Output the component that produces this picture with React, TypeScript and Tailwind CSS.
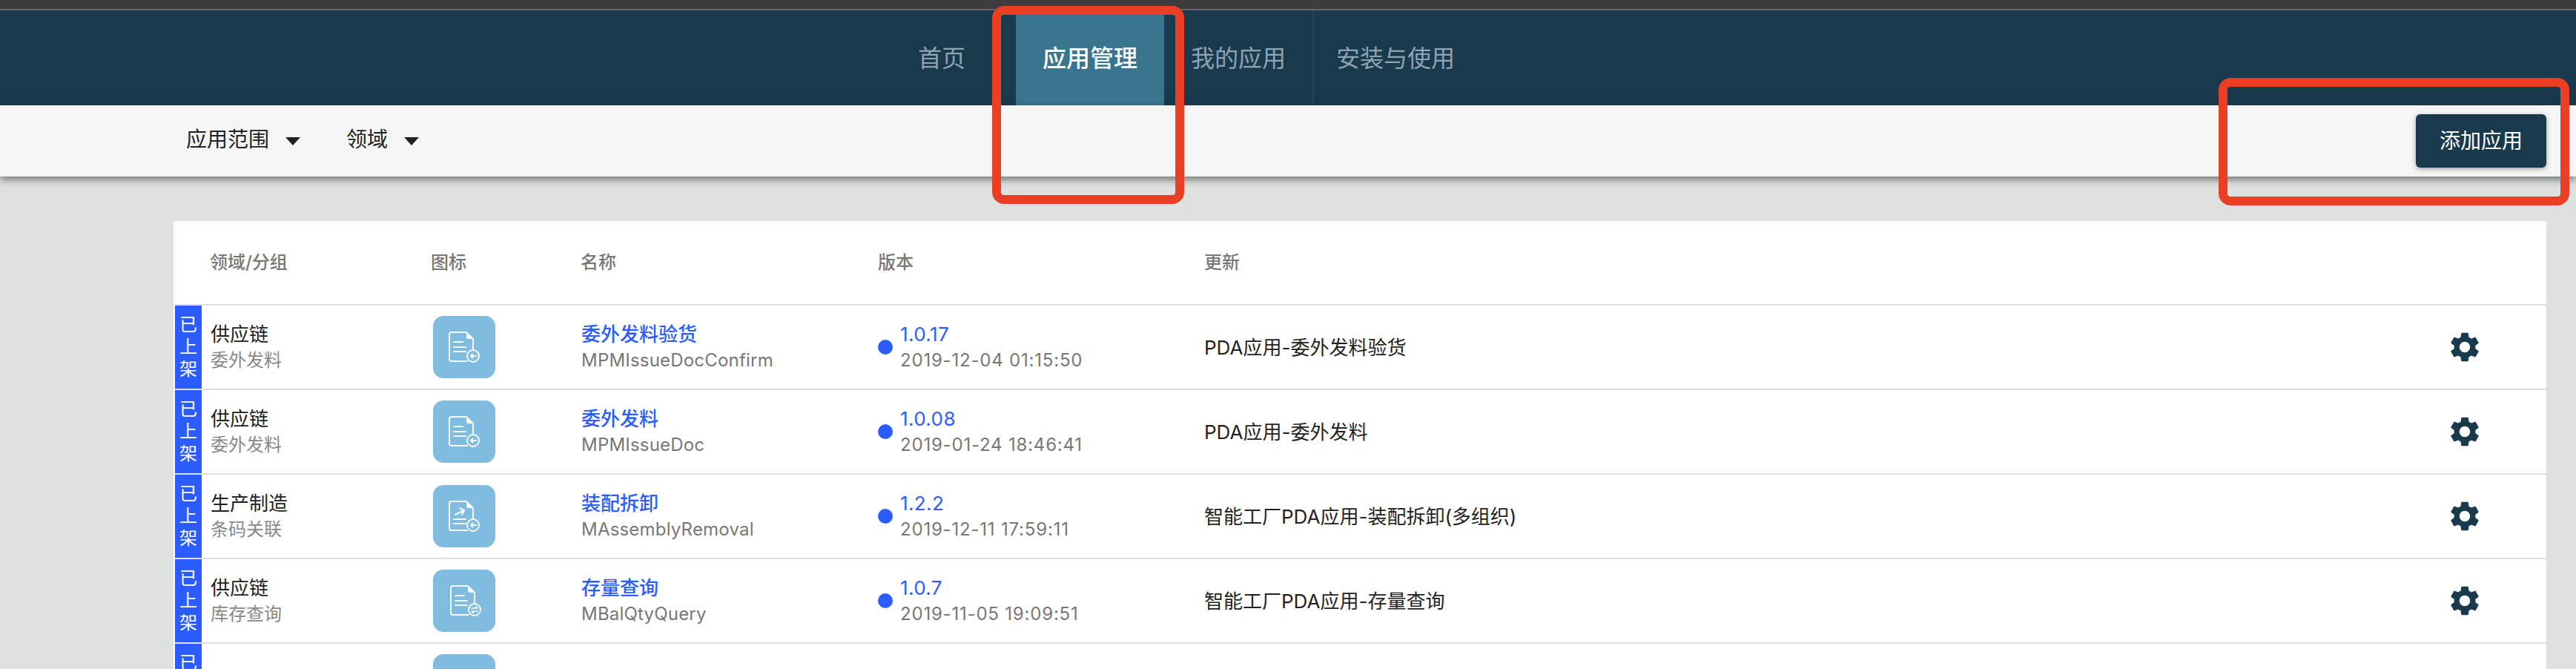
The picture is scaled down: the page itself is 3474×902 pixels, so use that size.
import { MdSettings } from "react-icons/md";

const rows = [
  { group: "供应链", sub: "委外发料", name: "委外发料验货", code: "MPMIssueDocConfirm", ver: "1.0.17", date: "2019-12-04 01:15:50", desc: "PDA应用-委外发料验货", icon: "out" },
  { group: "供应链", sub: "委外发料", name: "委外发料", code: "MPMIssueDoc", ver: "1.0.08", date: "2019-01-24 18:46:41", desc: "PDA应用-委外发料", icon: "out" },
  { group: "生产制造", sub: "条码关联", name: "装配拆卸", code: "MAssemblyRemoval", ver: "1.2.2", date: "2019-12-11 17:59:11", desc: "智能工厂PDA应用-装配拆卸(多组织)", icon: "arrow" },
  { group: "供应链", sub: "库存查询", name: "存量查询", code: "MBalQtyQuery", ver: "1.0.7", date: "2019-11-05 19:09:51", desc: "智能工厂PDA应用-存量查询", icon: "swap" },
  { group: "条码标签", sub: "", name: "期初开账", code: "", ver: "1.0.10", date: "", desc: "", icon: "out" },
];

function DocIcon({ kind }: { kind: string }) {
  const dx = kind === "swap" ? 2 : 0;
  return (
    <svg width="84" height="84" viewBox="0 0 84 84" fill="none" stroke="white" strokeOpacity="0.92" strokeWidth="2" strokeLinecap="round" strokeLinejoin="round" className="block">
      <g transform={`translate(${dx} 0)`}>
        {kind === "arrow" ? (
          <path d="M30 40l12-6M36 31l6 3-3 6M28 46h16M28 52h16" />
        ) : (
          <path d="M28 35h12M28 42h16M28 48h16" />
        )}
        <path d="M46 61H25a3 3 0 0 1-3-3V25a3 3 0 0 1 3-3h20l9 9v15" />
        <path d="M45 22l9 9h-6a3 3 0 0 1-3-3z" fill="white" stroke="none" />
        <circle cx="54" cy="54" r="8" />
        {kind === "swap" ? (
          <path d="M50 52h8M55.500 49.500l2.500 2.500M58 56h-8M52.500 58.500L50 56" strokeWidth="1.500" />
        ) : (
          <path d="M58 54h-7M53.500 51.500L51 54l2.500 2.500" strokeWidth="2" />
        )}
      </g>
    </svg>
  );
}

function Filter({ label }: { label: string }) {
  return (
    <div className="flex items-center gap-[22px]">
      <span className="mb-[4px] text-[28px] leading-none text-[#222]">{label}</span>
      <span className="h-0 w-0 border-x-[10px] border-t-[11px] border-x-transparent border-t-[#222]" />
    </div>
  );
}

export default function App() {
  return (
    <div className="relative h-[902px] overflow-hidden bg-[#dfe1e0] font-['Inter','Noto_Sans_CJK_SC',sans-serif]">
      <div className="h-[12px] bg-[#3c3c3c]" />
      <div className="h-[2px] bg-[#666]" />

      <nav className="flex h-[128px] bg-[#193a4d] pl-[1202px] text-[32px] text-[#8ea3b3]">
        <a className="flex items-center px-[36px] pt-[2px]">首页</a>
        <a className="ml-[32px] flex w-[200px] items-center justify-center bg-[#3a7590] pt-[2px] font-medium text-white">应用管理</a>
        <a className="flex items-center border-r-2 border-[#22465a] px-[36px] pt-[2px]">我的应用</a>
        <a className="flex items-center px-[30px] pt-[2px]">安装与使用</a>
      </nav>

      <div className="relative z-10 flex h-[96px] items-center justify-between bg-[#f5f5f5] pl-[251px] pr-[40px] shadow-[0_4px_10px_rgba(0,0,0,0.5)]">
        <div className="flex items-center gap-[62px]">
          <Filter label="应用范围" />
          <Filter label="领域" />
        </div>
        <button className="h-[72px] w-[176px] rounded-[6px] bg-[#193a4d] text-[28px] text-white shadow-[0_2px_6px_rgba(0,0,0,0.35)]">添加应用</button>
      </div>

      <div className="ml-[234px] mt-[60px] w-[3200px] bg-white pl-[2px]">
        <div className="flex h-[112px] items-center text-[24px] font-medium text-[#777]">
          <div className="w-[345px] pl-[47px]">领域/分组</div>
          <div className="w-[202px]">图标</div>
          <div className="w-[401px]">名称</div>
          <div className="w-[440px]">版本</div>
          <div>更新</div>
        </div>
        {rows.map((r, i) => (
          <div key={i} className="flex h-[114px] items-stretch border-t-2 border-[#dedede]">
            <div className="flex w-[36px] flex-col items-center justify-center bg-[#2b5cff] text-[24px] leading-[30px] text-white">
              <span>已</span>
              <span>上</span>
              <span>架</span>
            </div>
            <div className="flex w-[312px] flex-col justify-center pl-[12px]">
              <div className="text-[26px] leading-[36px] text-[#222]">{r.group}</div>
              <div className="text-[24px] leading-[34px] text-[#888]">{r.sub}</div>
            </div>
            <div className="flex w-[200px] items-center">
              <div className="h-[84px] w-[84px] rounded-[14px] bg-[#7fbcdf]">
                <DocIcon kind={r.icon} />
              </div>
            </div>
            <div className="flex w-[400px] flex-col justify-center">
              <div className="text-[26px] font-medium leading-[36px] text-[#2b5cff]">{r.name}</div>
              <div className="text-[24px] leading-[34px] tracking-[0.2px] text-[#777]">{r.code}</div>
            </div>
            <div className="flex w-[440px] items-center gap-[10px]">
              <span className="h-[20px] w-[20px] rounded-full bg-[#2b5cff]" />
              <div>
                <div className="text-[26px] leading-[36px] tracking-[0.4px] text-[#2b5cff]">{r.ver}</div>
                <div className="text-[24px] leading-[34px] tracking-[0.8px] text-[#777]">{r.date}</div>
              </div>
            </div>
            <div className="flex w-[1676px] items-center text-[26px] text-[#222]">{r.desc}</div>
            <div className="flex items-center">
              <MdSettings size={48} className="text-[#193a4d]" />
            </div>
          </div>
        ))}
      </div>

      <div className="pointer-events-none absolute left-[1338px] top-[8px] z-20 h-[267px] w-[259px] rounded-[16px] border-[12px] border-[#e94025]" />
      <div className="pointer-events-none absolute left-[2992px] top-[105px] z-20 h-[172px] w-[473px] rounded-[16px] border-[12px] border-[#e94025]" />
    </div>
  );
}
